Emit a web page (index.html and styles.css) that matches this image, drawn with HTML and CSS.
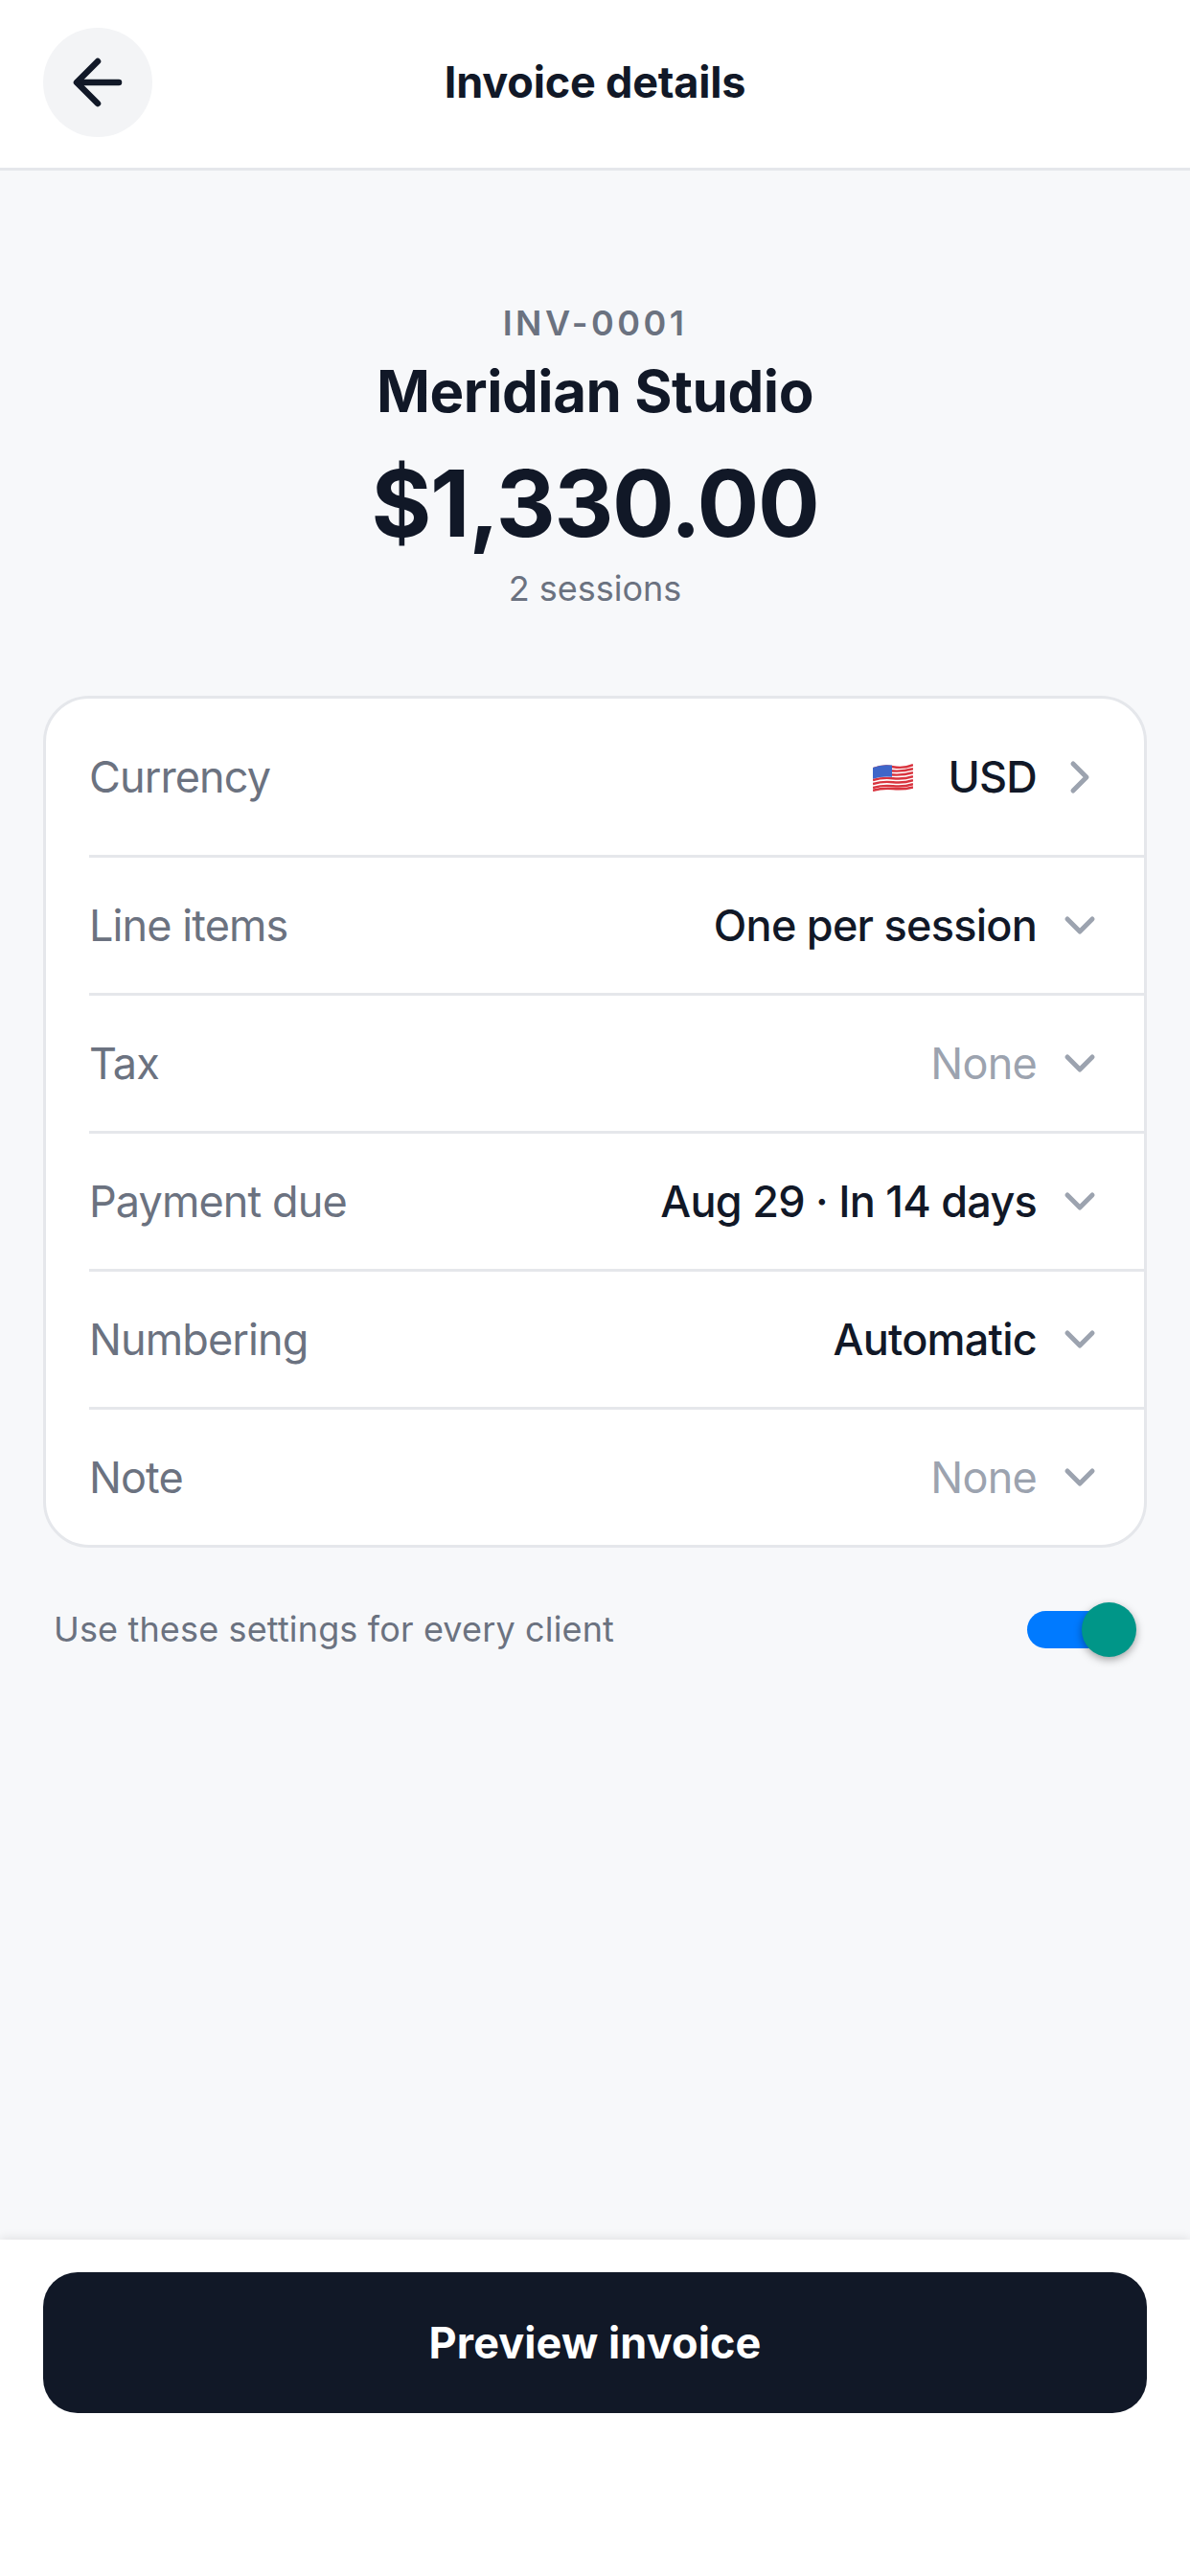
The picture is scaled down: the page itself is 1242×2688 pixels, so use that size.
FILE: index.html

```html
<!DOCTYPE html>
<html>
<head>
<meta charset="utf-8">
<title>Invoice details</title>
<link rel="stylesheet" href="styles.css">
</head>
<body>
<div class="screen">
  <header class="topbar">
    <button class="back-btn" aria-label="Back">
      <svg width="60" height="60" viewBox="0 0 60 60" fill="none" stroke="#111827" stroke-width="6.5" stroke-linecap="round" stroke-linejoin="round"><path d="M52 30H9"/><path d="M30 8 8 30l22 22"/></svg>
    </button>
    <h1 class="topbar-title">Invoice details</h1>
  </header>

  <main class="content">
    <section class="summary">
      <div class="inv-no">INV-0001</div>
      <h2 class="client">Meridian Studio</h2>
      <div class="amount">$1,330.00</div>
      <div class="sessions">2 sessions</div>
    </section>

    <section class="card">
      <div class="row row-first">
        <span class="label">Currency</span>
        <span class="value">
          <svg class="flag" width="42" height="30" viewBox="0 0 42 30">
            <path d="M0 5Q10 1 21 3T42 1V26Q32 28 21 27T0 29Z" fill="#fff"/>
            <g fill="none" stroke="#d9343f" stroke-width="2.4">
              <path d="M0 6.2Q10 2.2 21 4.2T42 2.2"/>
              <path d="M18 8.2Q30 9.6 42 6.2"/>
              <path d="M18 12.2Q30 13.6 42 10.2"/>
              <path d="M0 18Q10 15 21 16.2T42 14.2"/>
              <path d="M0 22Q10 19 21 20.2T42 18.2"/>
              <path d="M0 26Q10 23 21 24.2T42 22.2"/>
              <path d="M0 28.8Q10 26 21 27T42 25.4"/>
            </g>
            <path d="M0 5Q10 1 20 2.6V14.8Q10 13.6 0 16.8Z" fill="#3f66c9"/>
          </svg>
          <span class="usd">USD</span>
        </span>
        <svg class="chev" width="48" height="48" viewBox="0 0 48 48"><path d="M17 10l14 14-14 14"/></svg>
      </div>
      <div class="row">
        <span class="label">Line items</span>
        <span class="value">One per session</span>
        <svg class="chev" width="48" height="48" viewBox="0 0 48 48"><path d="M11 17l13 13 13-13"/></svg>
      </div>
      <div class="row">
        <span class="label">Tax</span>
        <span class="value muted">None</span>
        <svg class="chev" width="48" height="48" viewBox="0 0 48 48"><path d="M11 17l13 13 13-13"/></svg>
      </div>
      <div class="row">
        <span class="label">Payment due</span>
        <span class="value">Aug 29 · In 14 days</span>
        <svg class="chev" width="48" height="48" viewBox="0 0 48 48"><path d="M11 17l13 13 13-13"/></svg>
      </div>
      <div class="row">
        <span class="label">Numbering</span>
        <span class="value">Automatic</span>
        <svg class="chev" width="48" height="48" viewBox="0 0 48 48"><path d="M11 17l13 13 13-13"/></svg>
      </div>
      <div class="row row-last">
        <span class="label">Note</span>
        <span class="value muted">None</span>
        <svg class="chev" width="48" height="48" viewBox="0 0 48 48"><path d="M11 17l13 13 13-13"/></svg>
      </div>
    </section>

    <div class="setting">
      <span class="setting-text">Use these settings for every client</span>
      <span class="toggle"><span class="thumb"></span></span>
    </div>
  </main>

  <footer class="bottom">
    <button class="primary">Preview invoice</button>
  </footer>
</div>
</body>
</html>
```

FILE: styles.css

```css
* {
  box-sizing: border-box;
}
html, body {
  margin: 0;
  padding: 0;
}
body {
  font-family: Inter, "Liberation Sans", sans-serif;
  color: #111827;
  background: #f7f8fa;
}
.screen {
  width: 1242px;
  height: 2688px;
  display: flex;
  flex-direction: column;
}

/* header */
.topbar {
  height: 178px;
  flex: none;
  padding: 29px 45px 0;
  background: #fff;
  border-bottom: 3px solid #e5e7eb;
  display: flex;
  align-items: flex-start;
  position: relative;
}
.back-btn {
  width: 114px;
  height: 114px;
  padding: 0;
  border: none;
  border-radius: 50%;
  background: #f3f4f6;
  display: flex;
  align-items: center;
  justify-content: center;
}
.topbar-title {
  position: absolute;
  left: 0;
  right: 0;
  top: 58px;
  margin: 0;
  text-align: center;
  font-size: 45px;
  line-height: 56px;
  font-weight: 700;
  letter-spacing: -0.2px;
}

/* summary */
.content {
  flex: 1;
  padding: 135px 45px 0;
}
.summary {
  text-align: center;
}
.inv-no {
  font-size: 36px;
  line-height: 48px;
  font-weight: 600;
  letter-spacing: 3.5px;
  color: #6b7280;
}
.client {
  margin: 11px 0 0;
  font-size: 60px;
  line-height: 72px;
  font-weight: 700;
  letter-spacing: -0.45px;
}
.amount {
  margin-top: 24px;
  font-size: 96px;
  line-height: 114px;
  font-weight: 700;
  letter-spacing: -1.3px;
}
.sessions {
  margin-top: 8px;
  font-size: 36px;
  line-height: 48px;
  color: #6b7280;
}

/* settings card */
.card {
  margin-top: 88px;
  background: #fff;
  border: 3px solid #e5e7eb;
  border-radius: 48px;
  overflow: hidden;
}
.row {
  height: 144px;
  margin-left: 45px;
  padding-right: 43px;
  border-bottom: 3px solid #e5e7eb;
  display: flex;
  align-items: center;
}
.row-first {
  height: 166px;
}
.row-last {
  height: 141px;
  border-bottom: none;
}
.label {
  flex: 1;
  font-size: 45px;
  letter-spacing: -0.9px;
  color: #6b7280;
}
.value {
  font-size: 45px;
  font-weight: 500;
  letter-spacing: -0.75px;
  display: flex;
  align-items: center;
}
.value.muted {
  font-weight: 400;
  color: #9ca3af;
}
.flag {
  margin-right: 36px;
}
.chev {
  margin-left: 21px;
  flex: none;
  fill: none;
  stroke: #9ca3af;
  stroke-width: 5;
  stroke-linecap: round;
  stroke-linejoin: round;
}

/* toggle row */
.setting {
  margin-top: 28px;
  padding: 0 23px 0 11px;
  height: 114px;
  display: flex;
  align-items: center;
  justify-content: space-between;
}
.setting-text {
  font-size: 36px;
  letter-spacing: 0.15px;
  color: #6b7280;
}
.toggle {
  width: 102px;
  height: 39px;
  border-radius: 20px;
  background: #007aff;
  position: relative;
}
.thumb {
  position: absolute;
  right: -12px;
  top: -9px;
  width: 57px;
  height: 57px;
  border-radius: 50%;
  background: #009688;
  box-shadow: 0 3px 8px rgba(0, 0, 0, 0.35);
}

/* bottom action */
.bottom {
  height: 351px;
  flex: none;
  padding: 34px 45px 0;
  background: #fff;
  box-shadow: 0 -3px 9px rgba(0, 0, 0, 0.08);
}
.primary {
  width: 100%;
  height: 147px;
  border: none;
  border-radius: 36px;
  background: #111827;
  color: #fff;
  font-family: inherit;
  font-size: 45px;
  font-weight: 700;
  letter-spacing: 0.1px;
}
```
